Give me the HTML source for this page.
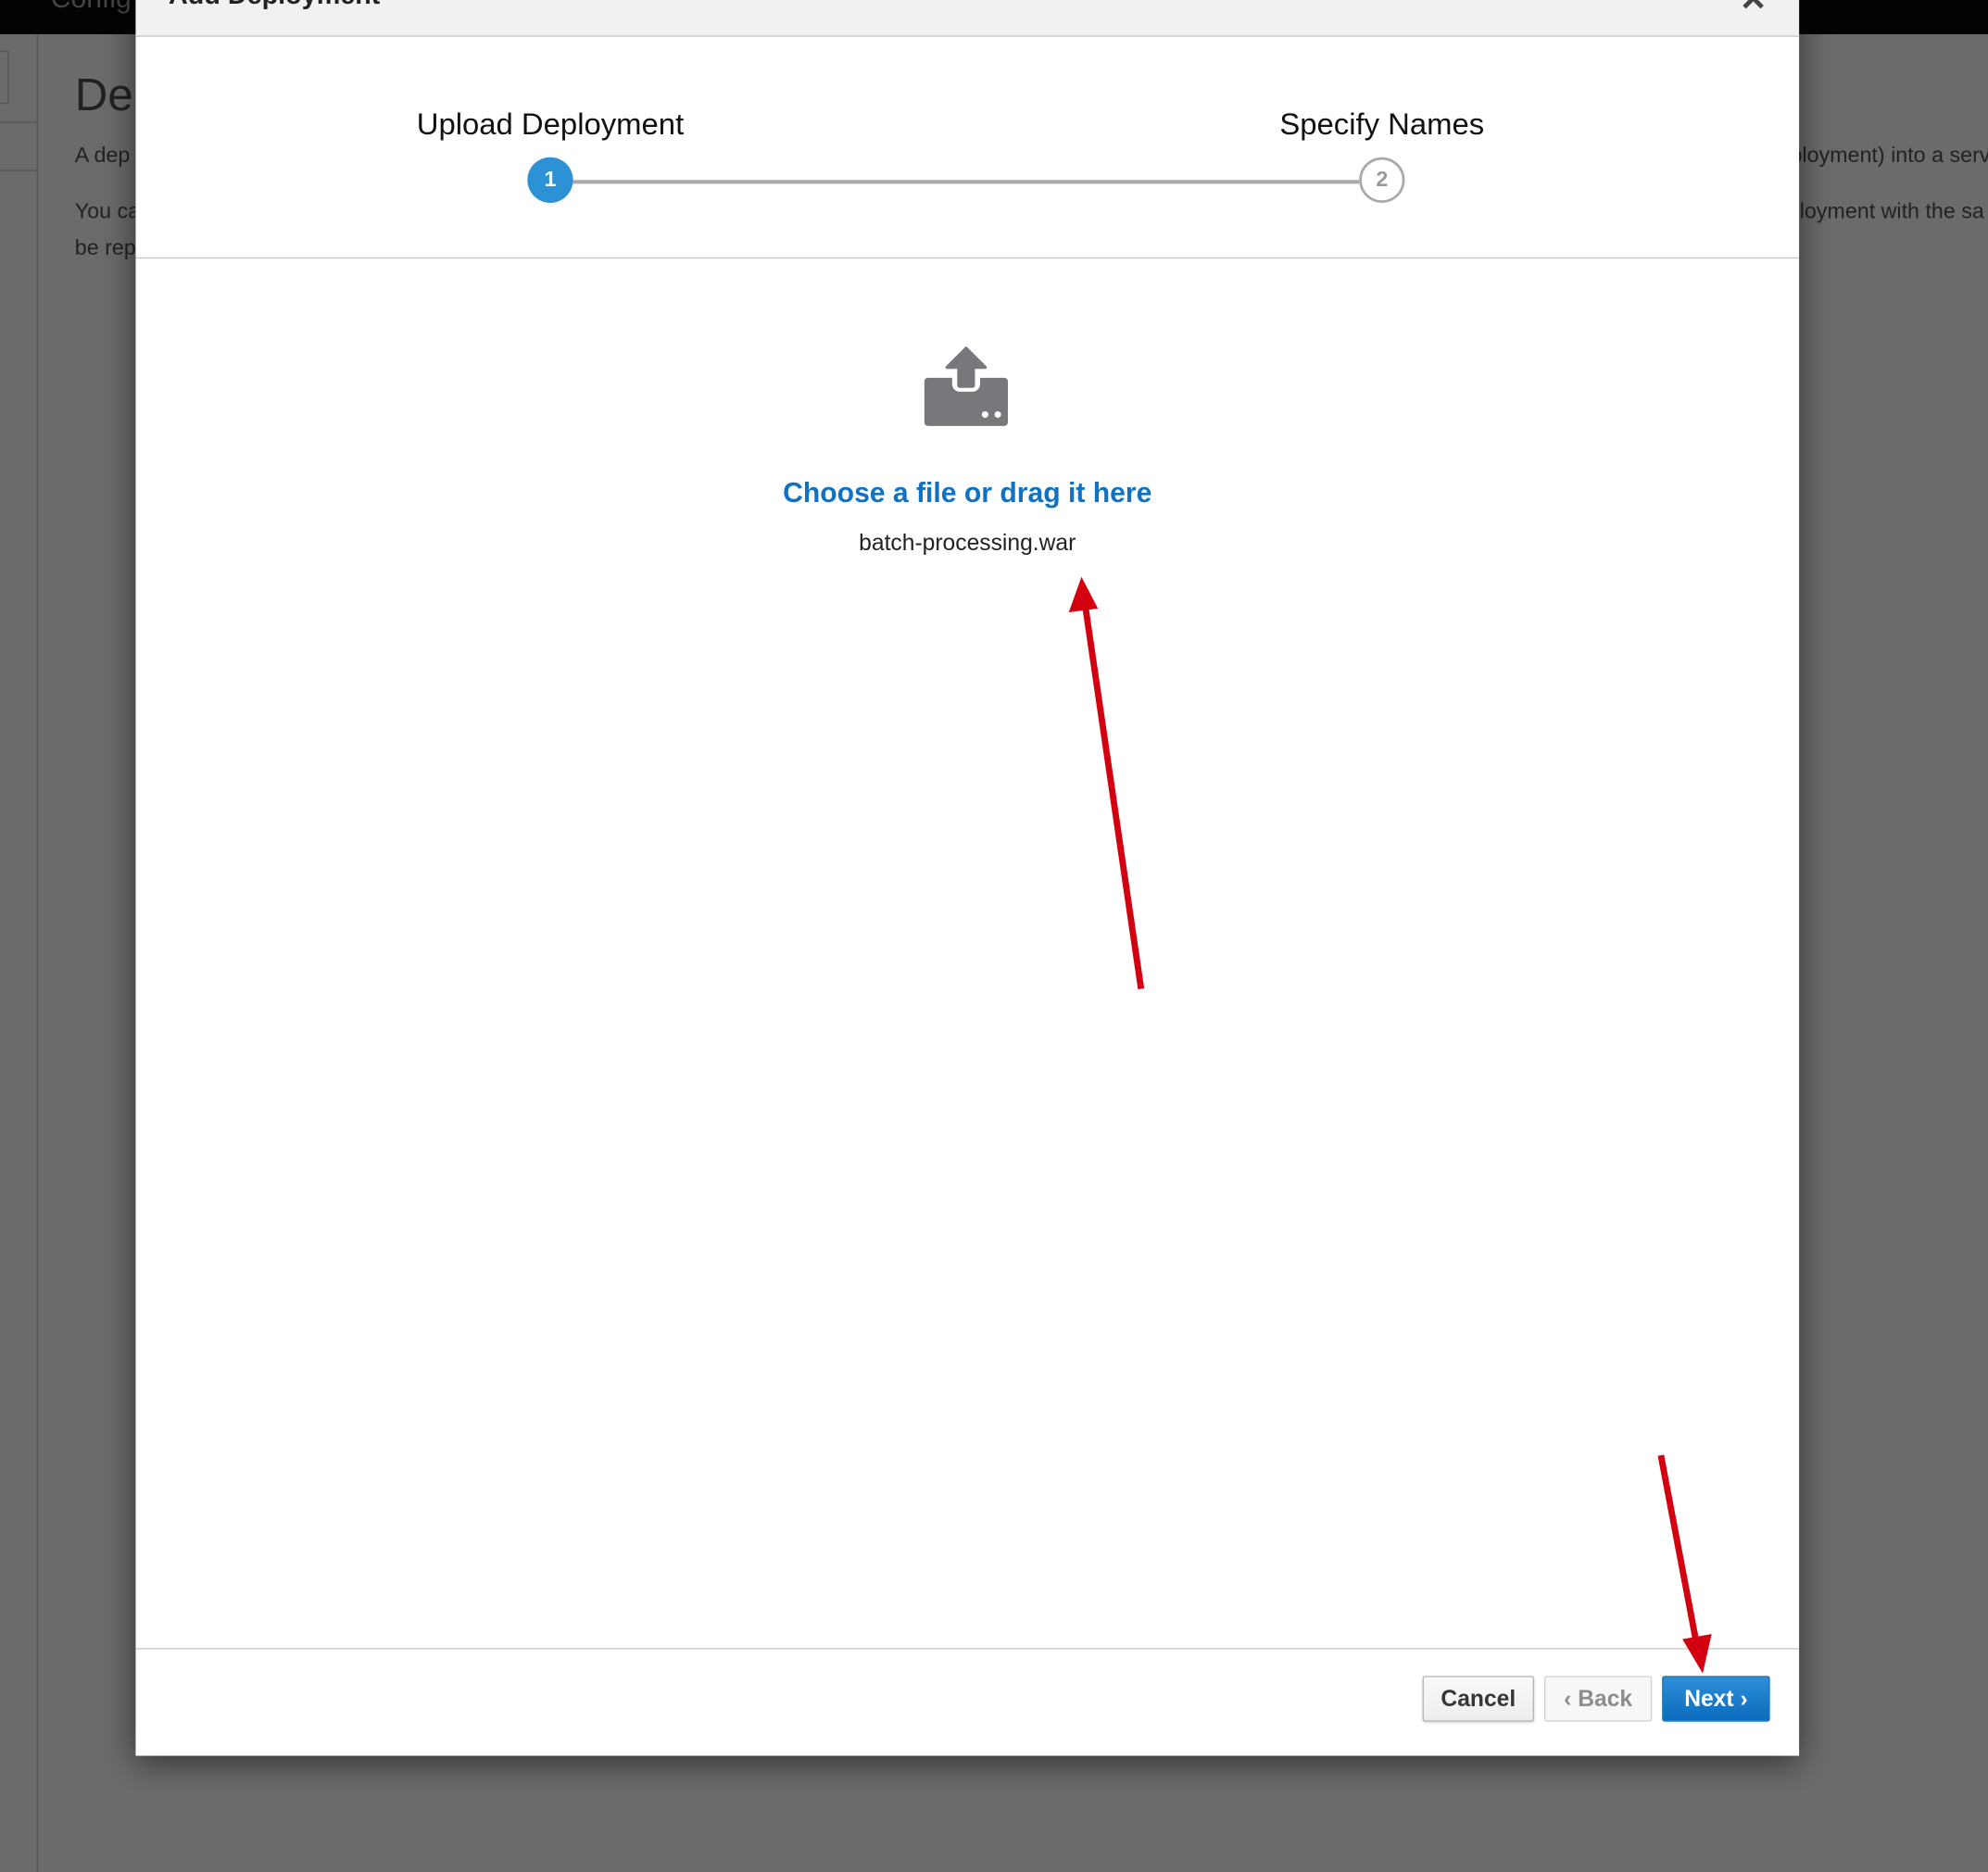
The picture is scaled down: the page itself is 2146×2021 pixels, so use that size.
<!DOCTYPE html>
<html><head><meta charset="utf-8"><style>
html,body{margin:0;padding:0;width:2146px;height:2018px;overflow:hidden;background:#6b6b6b}
#w{position:absolute;left:0;top:0;width:1568px;height:1475px;transform:scale(1.36862);transform-origin:0 0;font-family:"Liberation Sans",sans-serif;background:#6b6b6b}
.a{position:absolute;white-space:nowrap}
.bg{color:#222;font-size:17px}
.btn{position:absolute;top:1322px;height:36px;box-sizing:border-box;border-radius:2px;font-size:18px;font-weight:bold;text-align:center;line-height:34px}
</style></head><body><div id="w">
<div class="a" style="left:0;top:0;width:1568px;height:27px;background:#030303"></div>
<div class="a" style="left:40px;top:-14px;color:#444;font-size:22px">Config</div>
<div class="a" style="left:0;top:40px;width:6px;height:40px;border:1px solid #555;border-left:none"></div>
<div class="a" style="left:0;top:96px;width:29px;height:1px;background:#555"></div>
<div class="a" style="left:0;top:134px;width:29px;height:1px;background:#555"></div>
<div class="a" style="left:29px;top:27px;width:1px;height:1450px;background:#555"></div>
<div class="a" style="left:59px;top:54px;font-size:36px;color:#222">De</div>
<div class="a bg" style="left:59px;top:113px">A dep</div>
<div class="a bg" style="left:59px;top:157px">You ca</div>
<div class="a bg" style="left:59px;top:186px">be rep</div>
<div class="a bg" style="left:1412px;top:113px">ployment) into a serv</div>
<div class="a bg" style="left:1410px;top:157px">ployment with the sa</div>

<div class="a" style="left:107px;top:-10px;width:1312px;height:1395px;background:#fff;box-shadow:0 5px 25px rgba(0,0,0,.55)">
  <div class="a" style="left:0;top:0;width:1312px;height:38px;background:#f1f1f1;border-bottom:1px solid #c8c8c8"></div>
  <div class="a" style="left:26px;top:-5px;font-size:21px;font-weight:bold;color:#222">Add Deployment</div>
  <div class="a" style="left:1265px;top:-6px;font-size:26px;font-weight:bold;color:#444">✕</div>
  <div class="a" style="left:0;top:213px;width:1312px;height:1px;background:#c8c8c8"></div>
  <div class="a" style="left:177px;top:95px;width:300px;text-align:center;font-size:24px;color:#111">Upload Deployment</div>
  <div class="a" style="left:833px;top:95px;width:300px;text-align:center;font-size:24px;color:#111">Specify Names</div>
  <div class="a" style="left:345px;top:152px;width:620px;height:3px;background:#aaa"></div>
  <div class="a" style="left:309px;top:134px;width:36px;height:36px;border-radius:50%;background:#2d91d6;color:#fff;font-weight:bold;font-size:17px;text-align:center;line-height:36px">1</div>
  <div class="a" style="left:965px;top:134px;width:36px;height:36px;box-sizing:border-box;border-radius:50%;border:2px solid #aaa;background:#fff;color:#999;font-weight:bold;font-size:17px;text-align:center;line-height:32px">2</div>
  <svg class="a" style="left:622px;top:283px" width="66" height="64" viewBox="0 0 66 64">
    <rect x="0" y="25" width="66" height="38" rx="3" fill="#77787c"/>
    <rect x="22" y="10" width="22" height="26" rx="6" fill="#fff"/>
    <rect x="26" y="14" width="14" height="19" rx="2" fill="#77787c"/>
    <path d="M33 0 L49 16 Q50 18 48 18 L18 18 Q16 18 17 16 Z" fill="#77787c"/>
    <circle cx="48" cy="54" r="2.6" fill="#fff"/><circle cx="58" cy="54" r="2.6" fill="#fff"/>
  </svg>
  <div class="a" style="left:0;top:386px;width:1312px;text-align:center;font-size:22px;font-weight:bold;color:#0f72c2">Choose a file or drag it here</div>
  <div class="a" style="left:0;top:428px;width:1312px;text-align:center;font-size:18px;color:#222">batch-processing.war</div>
  <div class="a" style="left:0;top:1310px;width:1312px;height:1px;background:#c8c8c8"></div>
</div>
<div class="btn" style="left:1122px;width:88px;border:1px solid #b5b5b5;background:linear-gradient(#fafafa,#ededed);color:#363636;box-shadow:0 1px 2px rgba(0,0,0,.15)">Cancel</div>
<div class="btn" style="left:1218px;width:85px;border:1px solid #d1d1d1;background:#f7f7f7;color:#8b8d8f">‹ Back</div>
<div class="btn" style="left:1311px;width:85px;border:1px solid #00659c;background:linear-gradient(#2d8fd8,#0b6bbd);color:#fff">Next ›</div>
<svg class="a" style="left:0;top:0" width="1568" height="1475">
  <line x1="900" y1="780" x2="856" y2="478" stroke="#d30010" stroke-width="5"/>
  <polygon points="853,455 843,483 866,480" fill="#d30010"/>
  <line x1="1310" y1="1148" x2="1338" y2="1296" stroke="#d30010" stroke-width="5"/>
  <polygon points="1343,1320 1327,1293 1350,1289" fill="#d30010"/>
</svg>
</div></body></html>
